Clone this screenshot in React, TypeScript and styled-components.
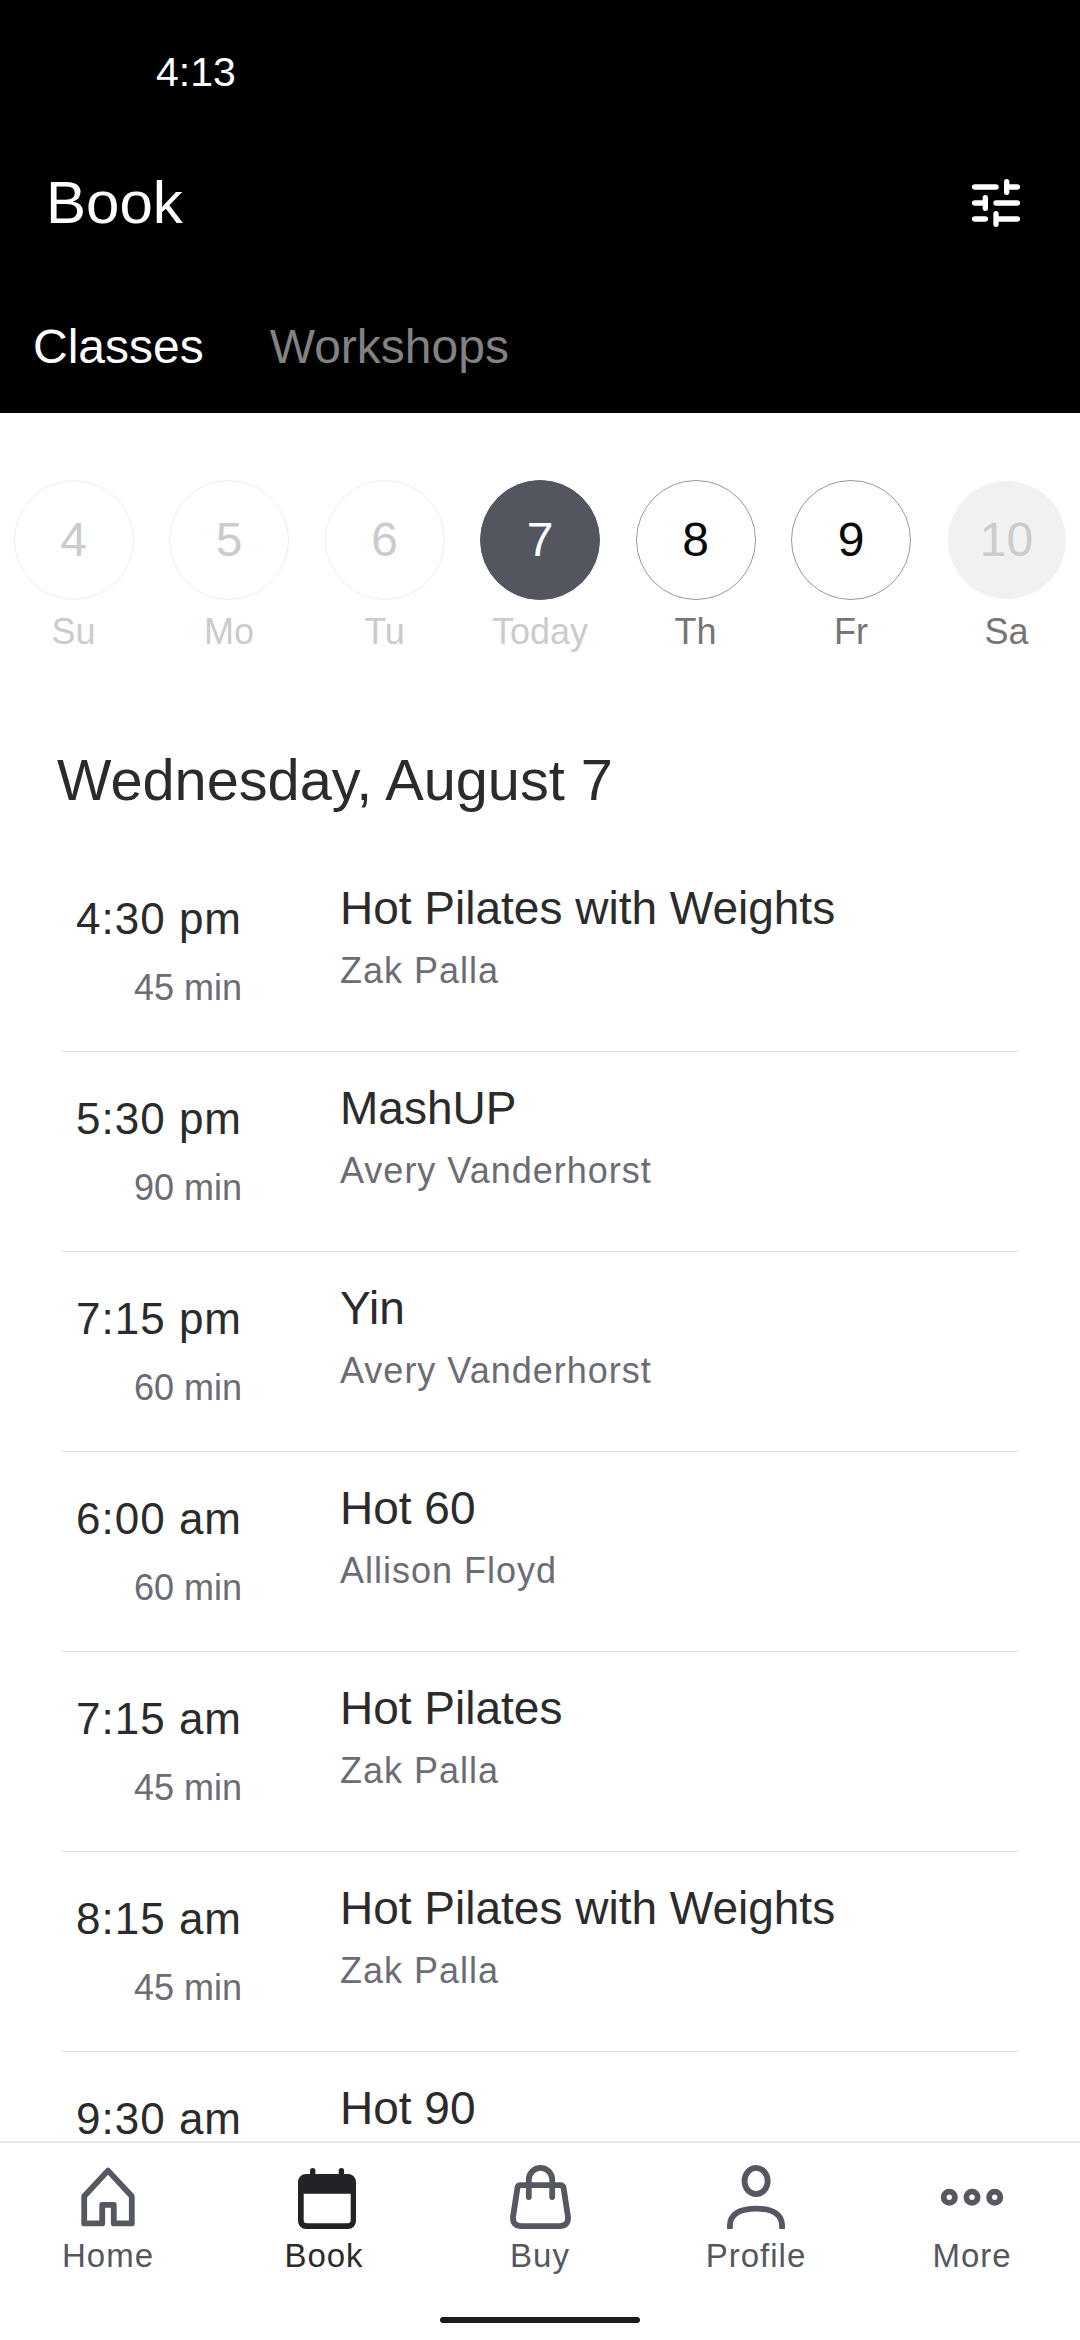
import React from "react";
import styled, { createGlobalStyle } from "styled-components";

const GlobalStyle = createGlobalStyle`
  * { box-sizing: border-box; }
  body { margin: 0; background: #fff; }
`;

const Screen = styled.div`
  width: 1080px;
  height: 2340px;
  display: flex;
  flex-direction: column;
  overflow: hidden;
  background: #fff;
  font-family: "Liberation Sans", Arial, Helvetica, sans-serif;
  color: #2b2b2b;
`;

const Header = styled.header`
  flex: none;
  height: 413px;
  background: #000;
  color: #fff;
`;

const StatusBar = styled.div`
  height: 169px;
  padding: 49px 0 0 156px;
  font-size: 41px;
  line-height: 46px;
`;

const TitleBar = styled.div`
  display: flex;
  justify-content: space-between;
  align-items: flex-start;
  height: 151px;
  padding: 0 52px 0 46px;
`;

const PageTitle = styled.h1`
  margin: 0;
  font-size: 60px;
  line-height: 67px;
  font-weight: 400;
`;

const FilterIcon = styled.svg`
  width: 64px;
  height: 64px;
  margin-top: 2px;
`;

const Tabs = styled.nav`
  display: flex;
  gap: 66px;
  padding-left: 33px;
`;

const Tab = styled.span<{ $active?: boolean }>`
  font-size: 48px;
  line-height: 53px;
  color: ${(p) => (p.$active ? "#fff" : "#828282")};
`;

const Week = styled.div`
  flex: none;
  align-self: center;
  display: grid;
  grid-template-columns: repeat(7, 155.5px);
  justify-items: center;
  margin-top: 67px;
`;

type DayKind = "past" | "selected" | "open" | "empty";

const Day = styled.div`
  display: flex;
  flex-direction: column;
  align-items: center;
  gap: 11px;
`;

const circle: Record<DayKind, string> = {
  past: "border-color: #ededed; color: #cbcbcb;",
  selected: "border-color: #53565f; background: #53565f; color: #fff;",
  open: "border-color: #999; color: #0a0a0a;",
  empty: "border-color: #fff; background: #f1f1f1; color: #cbcbcb;",
};

const DayNumber = styled.div<{ $kind: DayKind }>`
  display: flex;
  align-items: center;
  justify-content: center;
  width: 120px;
  height: 120px;
  border: 1px solid;
  border-radius: 50%;
  font-size: 48px;
  line-height: 52px;
  ${(p) => circle[p.$kind]}
`;

const DayLabel = styled.div<{ $muted: boolean }>`
  font-size: 36px;
  line-height: 41px;
  color: ${(p) => (p.$muted ? "#cbcbcb" : "#757575")};
`;

const DateHeading = styled.h2`
  flex: none;
  margin: 96px 0 40px 57px;
  font-size: 57.7px;
  line-height: 64px;
  font-weight: 400;
`;

const ClassList = styled.main`
  flex: 1;
  min-height: 0;
  overflow: hidden;
  padding: 0 62px;
`;

const ClassRow = styled.article`
  display: grid;
  grid-template-columns: 180px 1fr;
  column-gap: 98px;
  height: 200px;
  border-bottom: 1px solid #dfdfe1;
`;

const TimeColumn = styled.div`
  padding-top: 42px;
  text-align: right;
  white-space: nowrap;
`;

const Time = styled.div`
  font-size: 44px;
  line-height: 50px;
  letter-spacing: 1px;
`;

const Duration = styled.div`
  margin-top: 23px;
  font-size: 36px;
  line-height: 41px;
  color: #6b6c74;
`;

const InfoColumn = styled.div`
  padding-top: 30px;
  white-space: nowrap;
`;

const ClassName = styled.div`
  font-size: 46px;
  line-height: 52px;
`;

const Instructor = styled.div`
  margin-top: 16px;
  font-size: 36px;
  line-height: 41px;
  letter-spacing: 1px;
  color: #6b6c74;
`;

const TabBar = styled.footer`
  flex: none;
  display: flex;
  flex-direction: column;
  height: 199px;
  border-top: 2px solid #e7e7ec;
  background: #fff;
`;

const TabItems = styled.div`
  display: grid;
  grid-template-columns: repeat(5, 1fr);
  padding-top: 17px;
`;

const TabItem = styled.div<{ $active?: boolean }>`
  display: flex;
  flex-direction: column;
  align-items: center;
  gap: 5px;
  font-size: 33px;
  line-height: 37px;
  letter-spacing: 1px;
  color: ${(p) => (p.$active ? "#2b2b2b" : "#55575f")};
`;

const TabIcon = styled.svg`
  width: 72px;
  height: 72px;
  fill: none;
  stroke: #555860;
  stroke-width: 5.8;
  stroke-linejoin: round;
`;

const HomeIndicator = styled.div`
  width: 200px;
  height: 6px;
  margin: auto auto 17px;
  border-radius: 3px;
  background: #1b1b1b;
`;

const days: { n: number; label: string; kind: DayKind }[] = [
  { n: 4, label: "Su", kind: "past" },
  { n: 5, label: "Mo", kind: "past" },
  { n: 6, label: "Tu", kind: "past" },
  { n: 7, label: "Today", kind: "selected" },
  { n: 8, label: "Th", kind: "open" },
  { n: 9, label: "Fr", kind: "open" },
  { n: 10, label: "Sa", kind: "empty" },
];

const classes = [
  { time: "4:30 pm", min: 45, name: "Hot Pilates with Weights", by: "Zak Palla" },
  { time: "5:30 pm", min: 90, name: "MashUP", by: "Avery Vanderhorst" },
  { time: "7:15 pm", min: 60, name: "Yin", by: "Avery Vanderhorst" },
  { time: "6:00 am", min: 60, name: "Hot 60", by: "Allison Floyd" },
  { time: "7:15 am", min: 45, name: "Hot Pilates", by: "Zak Palla" },
  { time: "8:15 am", min: 45, name: "Hot Pilates with Weights", by: "Zak Palla" },
  { time: "9:30 am", min: 90, name: "Hot 90", by: "" },
];

const tabItems = [
  {
    label: "Home",
    icon: <path d="M36 10.6 12.2 36.3V63.4H30.2V44.8H41.8V63.4H59.8V36.3Z" />,
  },
  {
    label: "Book",
    active: true,
    icon: (
      <g stroke="none" fill="#222326">
        <rect x="22" y="8" width="5.4" height="12" rx="2.7" />
        <rect x="50.7" y="8" width="5.4" height="12" rx="2.7" />
        <path
          fillRule="evenodd"
          d="M18 14H60a8 8 0 0 1 8 8V61a8 8 0 0 1-8 8H18a8 8 0 0 1-8-8V22a8 8 0 0 1 8-8ZM15.7 33.7V60.3a3 3 0 0 0 3 3H59.7a3 3 0 0 0 3-3V33.7Z"
        />
      </g>
    ),
  },
  {
    label: "Buy",
    icon: (
      <>
        <path d="M16.8 25.2H56.2Q59.2 25.2 59.6 28.2L64 57Q64.6 66.1 55.5 66.1H17.5Q8.4 66.1 9 57L13.4 28.2Q13.8 25.2 16.8 25.2Z" />
        <path strokeLinecap="round" d="M24.8 37V19.6a11.7 11.7 0 0 1 23.4 0V37" />
      </>
    ),
  },
  {
    label: "Profile",
    icon: (
      <>
        <ellipse cx="36.1" cy="21" rx="11.6" ry="13.1" />
        <path d="M9.9 69V66C9.9 54 20 48.6 36 48.6S62.1 54 62.1 66V69" />
      </>
    ),
  },
  {
    label: "More",
    icon: (
      <>
        <circle cx="13.3" cy="37.3" r="5.6" />
        <circle cx="36" cy="37.3" r="5.6" />
        <circle cx="58.7" cy="37.3" r="5.6" />
      </>
    ),
  },
];

export default function App() {
  return (
    <Screen>
      <GlobalStyle />
      <Header>
        <StatusBar>4:13</StatusBar>
        <TitleBar>
          <PageTitle>Book</PageTitle>
          <FilterIcon
            viewBox="0 0 24 24"
            fill="none"
            stroke="#fff"
            strokeWidth="2"
            strokeLinecap="round"
          >
            <path d="M4 6H12M16 4V8M16 6H20M4 12H8M8 10V14M12 12H20M4 18H8M12 16V20M12 18H20" />
          </FilterIcon>
        </TitleBar>
        <Tabs>
          <Tab $active>Classes</Tab>
          <Tab>Workshops</Tab>
        </Tabs>
      </Header>
      <Week>
        {days.map((d) => (
          <Day key={d.n}>
            <DayNumber $kind={d.kind}>{d.n}</DayNumber>
            <DayLabel $muted={d.kind === "past" || d.kind === "selected"}>{d.label}</DayLabel>
          </Day>
        ))}
      </Week>
      <DateHeading>Wednesday, August 7</DateHeading>
      <ClassList>
        {classes.map((c) => (
          <ClassRow key={c.time}>
            <TimeColumn>
              <Time>{c.time}</Time>
              {c.by && <Duration>{c.min} min</Duration>}
            </TimeColumn>
            <InfoColumn>
              <ClassName>{c.name}</ClassName>
              {c.by && <Instructor>{c.by}</Instructor>}
            </InfoColumn>
          </ClassRow>
        ))}
      </ClassList>
      <TabBar>
        <TabItems>
          {tabItems.map((t) => (
            <TabItem key={t.label} $active={t.active}>
              <TabIcon viewBox="0 0 72 72">{t.icon}</TabIcon>
              {t.label}
            </TabItem>
          ))}
        </TabItems>
        <HomeIndicator />
      </TabBar>
    </Screen>
  );
}
